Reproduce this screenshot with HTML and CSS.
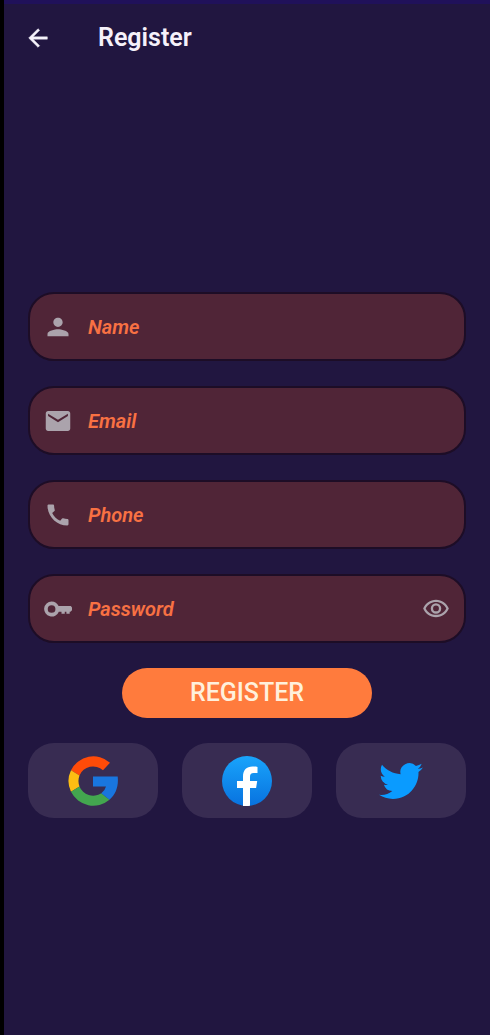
FILE: index.html
```html
<!DOCTYPE html>
<html lang="en">
<head>
<meta charset="utf-8">
<meta name="viewport" content="width=device-width, initial-scale=1">
<title>Register</title>
<link rel="stylesheet" href="styles.css">
</head>
<body>
<div class="screen">
  <header class="app-bar">
    <button class="icon-button" type="button" aria-label="Back">
      <svg class="back-icon" viewBox="0 0 24 24" aria-hidden="true"><path d="M20 11H7.830l5.590-5.590L12 4l-8 8 8 8 1.410-1.410L7.830 13H20v-2z"/></svg>
    </button>
    <h1 class="title">Register</h1>
  </header>
  <main class="content">
    <form class="form">
      <label class="field">
        <svg class="field-icon" viewBox="0 0 24 24" aria-hidden="true"><path d="M12 12c2.210 0 4-1.790 4-4s-1.790-4-4-4-4 1.790-4 4 1.790 4 4 4zm0 2c-2.670 0-9 1.340-9 4v2h18v-2c0-2.660-6.330-4-9-4z"/></svg>
        <input class="field-input" type="text" placeholder="Name" aria-label="Name">
      </label>
      <label class="field">
        <svg class="field-icon" viewBox="0 0 24 24" aria-hidden="true"><path d="M20.500 3.500h-17c-1.100 0-1.990.9-1.990 2L1.500 18.500c0 1.100.9 2 2 2h17c1.100 0 2-.9 2-2V5.500c0-1.100-.9-2-2-2zm0 4.300L12 13 3.500 7.800V5.700L12 11l8.500-5.300v2.100z"/></svg>
        <input class="field-input" type="email" placeholder="Email" aria-label="Email">
      </label>
      <label class="field">
        <svg class="field-icon" viewBox="0 0 24 24" aria-hidden="true"><path d="M20.010 15.380c-1.230 0-2.420-.2-3.530-.56a.98.98 0 0 0-1.010.24l-1.570 1.970c-2.830-1.350-5.480-3.900-6.890-6.830l1.950-1.660c.27-.28.35-.67.24-1.020-.37-1.110-.56-2.300-.56-3.530 0-.54-.45-.99-.99-.99H4.190C3.650 3 3 3.240 3 3.990 3 13.280 10.730 21 20.010 21c.71 0 .99-.63.99-1.180v-3.450c0-.54-.45-.99-.99-.99z"/></svg>
        <input class="field-input" type="tel" placeholder="Phone" aria-label="Phone">
      </label>
      <div class="field">
        <svg class="field-icon" viewBox="0 0 24 24" aria-hidden="true"><path fill-rule="evenodd" d="M6.500 5.500a6.500 6.500 0 0 1 6 4H23l1 1.200v2.300l-1.300 1.300h-.7v1.700h-2.800v-1.700h-1.400v1.700H15v-1.700h-2.300A6.500 6.500 0 1 1 6.500 5.500zm0 3.200a3.300 3.300 0 1 0 0 6.600 3.300 3.300 0 0 0 0-6.600z"/></svg>
        <input class="field-input" type="password" placeholder="Password" aria-label="Password">
        <button class="icon-button" type="button" aria-label="Show password">
          <svg class="eye-icon" viewBox="0 0 24 24" aria-hidden="true"><path d="M12 6c3.790 0 7.170 2.130 8.820 5.500C19.170 14.870 15.790 17 12 17s-7.170-2.130-8.820-5.500C4.830 8.130 8.210 6 12 6m0-2C7 4 2.730 7.110 1 11.500 2.730 15.890 7 19 12 19s9.270-3.110 11-7.500C21.270 7.110 17 4 12 4zm0 5a2.500 2.500 0 1 1 0 5 2.500 2.500 0 0 1 0-5m0-2a4.500 4.500 0 1 0 0 9 4.500 4.500 0 0 0 0-9z"/></svg>
        </button>
      </div>
      <button class="submit" type="submit">REGISTER</button>
      <div class="social">
        <button class="social-button" type="button" aria-label="Register with Google">
          <svg class="brand-icon" viewBox="0 0 50 50" aria-hidden="true">
            <path fill="#ff4b08" d="M3 14.200A25 25 0 0 1 42 6.700L35 14.300A14.700 14.700 0 0 0 11.500 19.500Z"/>
            <path fill="#fdbd12" d="M3 14.200a25 25 0 0 0 0 21.600l8.500-5.400a15 15 0 0 1 0-10.900Z"/>
            <path fill="#43a64f" d="M3 35.800A25 25 0 0 0 41.500 43.800L33.300 37.300A14.700 14.700 0 0 1 11.500 30.400Z"/>
            <path fill="#1976df" d="M25 20.500H49.700C50.700 30 48 38.200 41.500 43.800L33.300 37.300A12 12 0 0 0 38 30.500H25Z"/>
          </svg>
        </button>
        <button class="social-button" type="button" aria-label="Register with Facebook">
          <svg class="brand-icon" viewBox="0 0 50 50" aria-hidden="true">
            <defs><linearGradient id="fb" x1="0" y1="0" x2="0" y2="1"><stop offset="0" stop-color="#19a4fb"/><stop offset="1" stop-color="#0872df"/></linearGradient></defs>
            <circle cx="25" cy="25" r="25" fill="url(#fb)"/>
            <path fill="#fff" d="M21 50V32h-6v-7h6v-4.500C21 14 24.500 10.500 30.500 10.500c2 0 3.700.1 5 .4V17h-3.700c-3 0-3.800 1.500-3.800 4v4h7.200l-1.100 7H28v17.800q-3.500.5-7 .2Z"/>
          </svg>
        </button>
        <button class="social-button" type="button" aria-label="Register with Twitter">
          <svg class="twitter-icon" viewBox="0 0 24 24" aria-hidden="true"><path fill="#0a9bff" d="M23.950 4.570a10 10 0 0 1-2.820.77 4.960 4.960 0 0 0 2.160-2.720c-.95.55-2 .95-3.130 1.180a4.920 4.920 0 0 0-8.380 4.480C7.690 8.090 4.070 6.130 1.640 3.160a4.820 4.820 0 0 0-.67 2.480c0 1.710.87 3.210 2.190 4.100a4.900 4.900 0 0 1-2.230-.62v.06a4.920 4.920 0 0 0 3.950 4.830 5 5 0 0 1-2.210.08 4.940 4.940 0 0 0 4.600 3.420A9.870 9.870 0 0 1 0 19.540a13.990 13.990 0 0 0 7.550 2.210c9.050 0 14-7.500 14-13.980 0-.21 0-.42-.02-.63a9.940 9.940 0 0 0 2.420-2.570z"/></svg>
        </button>
      </div>
    </form>
  </main>
</div>
</body>
</html>
```
FILE: styles.css
```css
* {
  box-sizing: border-box;
}

body {
  margin: 0;
  background: #211640;
  font-family: Roboto, "Liberation Sans", sans-serif;
}

.screen {
  display: flex;
  flex-direction: column;
  min-height: 100vh;
  border-left: 4px solid #000;
}

.app-bar {
  display: flex;
  align-items: center;
  gap: 46px;
  height: 75px;
  padding: 0 20px 4px;
  border-top: 4px solid #20115a;
}

.icon-button {
  display: flex;
  padding: 0;
  border: 0;
  background: none;
  cursor: pointer;
}

.back-icon {
  width: 28px;
  height: 28px;
  fill: #f5f1fa;
  stroke: #f5f1fa;
  stroke-width: 0.4;
}

.title {
  margin: 0;
  color: #f5f1fa;
  font-size: 25px;
  font-weight: 600;
  line-height: 32px;
}

.content {
  display: flex;
  flex: 1;
  flex-direction: column;
  justify-content: center;
  padding: 0 24px;
}

.form {
  display: flex;
  flex-direction: column;
  gap: 25px;
}

.field {
  display: flex;
  align-items: center;
  gap: 16px;
  height: 69px;
  padding: 0 14px;
  border: 2px solid #1d0d26;
  border-radius: 26px;
  background: #502537;
}

.field-icon,
.eye-icon {
  flex: none;
  width: 28px;
  height: 28px;
  fill: #aba3ac;
}

.field-input {
  flex: 1;
  min-width: 0;
  padding: 0;
  border: 0;
  outline: 0;
  background: none;
  color: #ff7940;
  font: italic 600 20px/24px Roboto, "Liberation Sans", sans-serif;
}

.field-input::placeholder {
  color: #f87143;
  opacity: 1;
}

.submit {
  align-self: center;
  width: 57%;
  height: 50px;
  padding: 0;
  border: 0;
  border-radius: 25px;
  background: #ff7b3d;
  color: #fff0dc;
  font: 500 25px/32px Roboto, "Liberation Sans", sans-serif;
  cursor: pointer;
}

.social {
  display: grid;
  grid-template-columns: repeat(3, 1fr);
  gap: 24px;
}

.social-button {
  display: flex;
  align-items: center;
  justify-content: center;
  height: 75px;
  padding: 0;
  border: 0;
  border-radius: 26px;
  background: #382c52;
  cursor: pointer;
}

.brand-icon {
  width: 50px;
  height: 50px;
}

.twitter-icon {
  width: 44px;
  height: 44px;
}
```
